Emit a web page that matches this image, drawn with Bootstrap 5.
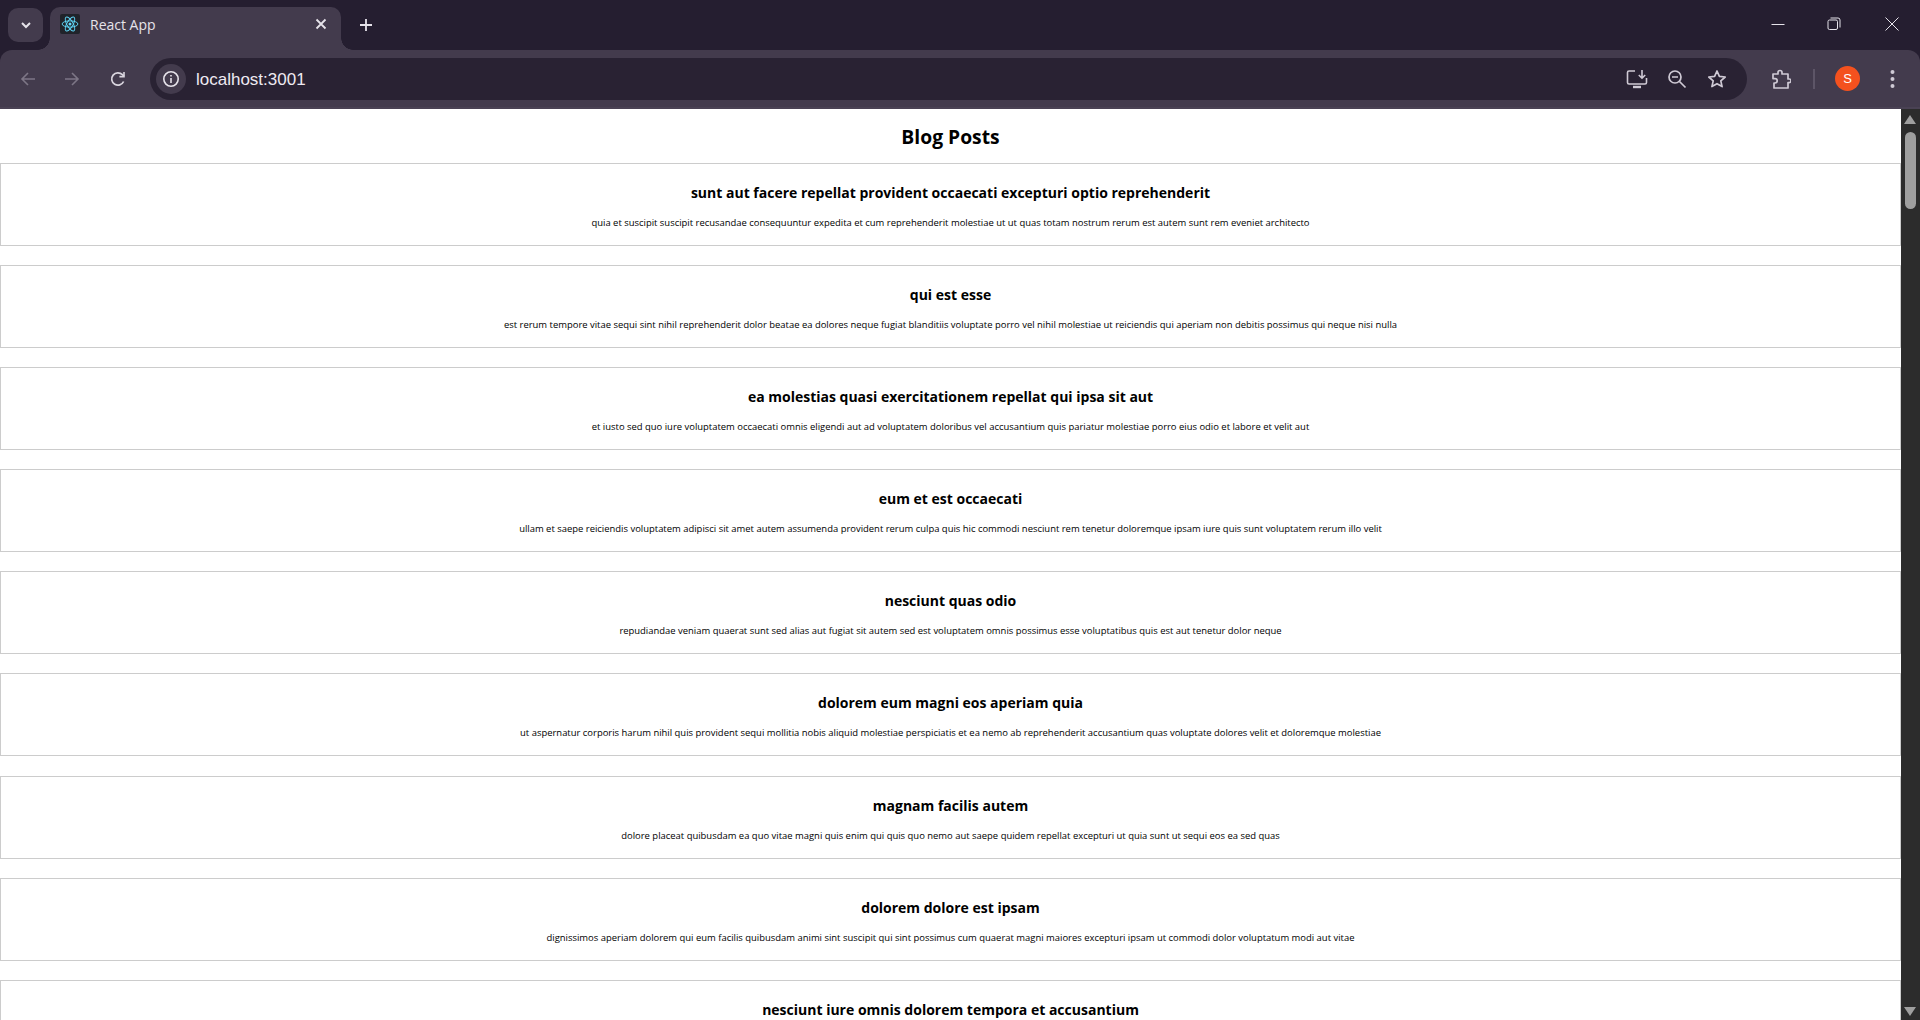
<!DOCTYPE html>
<html lang="en">
<head>
  <meta charset="UTF-8" />
  <title>React App</title>
  <link href="https://cdn.jsdelivr.net/npm/bootstrap@5.3.0/dist/css/bootstrap.min.css" rel="stylesheet" />
  <style>
    html, body { height: 100%; overflow: hidden; }
    body { font-family: "Open Sans", "Noto Sans", sans-serif; color: #000; }
    .shell { height: 1020px; background: #251e30; }
    .tabstrip { height: 50px; color: #e6e3ea; }
    .tab-toggle { width: 35px; height: 34px; margin: 8px 0 0 8px; background: #433b4d; border-radius: 10px; }
    .tab-live { width: 291px; height: 43px; margin: 7px 0 0 7px; padding: 0 14px 9px 10px; background: #433b4d; border-radius: 10px 10px 0 0; position: relative; font-size: 14px; color: #e6e3ea; }
    .tab-live::before, .tab-live::after { content: ""; position: absolute; bottom: 0; width: 12px; height: 12px; }
    .tab-live::before { left: -12px; background: radial-gradient(circle at 0 0, transparent 11.5px, #433b4d 12px); }
    .tab-live::after { right: -12px; background: radial-gradient(circle at 100% 0, transparent 11.5px, #433b4d 12px); }
    .favicon { width: 20px; height: 20px; background: #20232a; border-radius: 2px; }
    .tab-name { margin-left: 10px; }
    .tab-add { margin: 8px 0 0 8px; width: 34px; height: 34px; }
    .win-btn { width: 57px; height: 48px; }
    .win-restore { padding-right: 2px; }
    .toolbar { height: 59px; background: #433b4d; border-bottom: 2px solid #4a4254; border-radius: 12px 12px 0 0; padding: 0 11px 0 6px; }
    .nav-ico { width: 44px; height: 42px; }
    .reload-slot { margin-left: 2px; }
    .omnibox { height: 42px; width: 1597px; margin-left: 10px; background: #292233; border-radius: 21px; padding: 0 10px 0 6px; color: #eeeaf2; font-family: "Liberation Sans", sans-serif; font-size: 17px; }
    .info-ico { width: 30px; height: 30px; background: #433b4d; border-radius: 50%; margin-right: 10px; }
    .url-text { padding-top: 2px; }
    .omni-ico { width: 40px; }
    .puzzle-slot { margin-left: 14px; }
    .avatar { width: 25px; height: 25px; margin-left: 20px; border-radius: 50%; background: #f4511e; color: #fff; font-size: 13px; line-height: 25px; text-align: center; font-family: "Liberation Sans", sans-serif; }
    .divider { width: 2px; height: 20px; margin-left: 12px; background: #5d5567; }
    .more-dots { margin-right: 14px; }
    .viewport { height: 911px; }
    .page { overflow: hidden; }
    .page-title { font-size: 19.3px; line-height: 27px; font-weight: 700; margin: 14px 0 13px; }
    .post { height: 83px; margin-bottom: 19.1px; border: 1px solid #ccc; padding-top: 19px; }
    .post-title { font-size: 14px; line-height: 20px; font-weight: 700; margin: 0 0 13px; }
    .post-body { font-size: 9.45px; line-height: 13px; margin: 0; }
    .track { width: 19px; background: #2c2c2c; position: relative; }
    .thumb { position: absolute; left: 4px; top: 23px; width: 11px; height: 77px; border-radius: 6px; background: #9f9f9f; }
    .arrow-up, .arrow-down { position: absolute; left: 3px; width: 0; height: 0; border-left: 6.5px solid transparent; border-right: 6.5px solid transparent; }
    .arrow-up { top: 6px; border-bottom: 9px solid #9f9f9f; }
    .arrow-down { bottom: 4px; border-top: 9px solid #9f9f9f; }
  </style>
</head>
<body>
  <div class="shell d-flex flex-column">
    <div class="tabstrip d-flex">
      <div class="tab-toggle d-flex align-items-center justify-content-center">
        <svg width="12" height="12" viewBox="0 0 12 12" fill="none" stroke="#e6e3ea" stroke-width="2"><path d="M2 4l4 4 4-4"/></svg>
      </div>
      <div class="tab-live d-flex align-items-center">
        <div class="favicon d-flex align-items-center justify-content-center flex-shrink-0">
          <svg width="18" height="18" viewBox="-12 -12 24 24" fill="none" stroke="#61dafb" stroke-width="1.2"><circle r="2" fill="#61dafb" stroke="none"/><ellipse rx="10.5" ry="4.2"/><ellipse rx="10.5" ry="4.2" transform="rotate(60)"/><ellipse rx="10.5" ry="4.2" transform="rotate(120)"/></svg>
        </div>
        <span class="tab-name flex-grow-1">React App</span>
        <svg width="12" height="12" viewBox="0 0 12 12" stroke="#e6e3ea" stroke-width="1.8"><path d="M1.5 1.5l9 9M10.5 1.5l-9 9"/></svg>
      </div>
      <div class="tab-add d-flex align-items-center justify-content-center">
        <svg width="14" height="14" viewBox="0 0 14 14" stroke="#e6e3ea" stroke-width="1.8"><path d="M7 1v12M1 7h12"/></svg>
      </div>
      <div class="ms-auto d-flex">
        <div class="win-btn d-flex align-items-center justify-content-center">
          <svg width="14" height="14" viewBox="0 0 14 14" stroke="#e6e3ea" stroke-width="1"><path d="M0.5 7.5h13"/></svg>
        </div>
        <div class="win-btn win-restore d-flex align-items-center justify-content-center">
          <svg width="14" height="14" viewBox="0 0 14 14" fill="none" stroke="#e6e3ea" stroke-width="1"><rect x="1" y="3" width="9.5" height="9.5" rx="1.5"/><path d="M3.5 1h7.5a2 2 0 0 1 2 2v7.5"/></svg>
        </div>
        <div class="win-btn d-flex align-items-center justify-content-center">
          <svg width="14" height="14" viewBox="0 0 14 14" stroke="#e6e3ea" stroke-width="1"><path d="M0.5 0.5l13 13M13.5 0.5l-13 13"/></svg>
        </div>
      </div>
    </div>
    <div class="toolbar d-flex align-items-center">
      <div class="nav-ico d-flex align-items-center justify-content-center">
        <svg width="16" height="16" viewBox="0 0 16 16" fill="none" stroke="#7d7686" stroke-width="1.6"><path d="M15 8H2M8 2L2 8l6 6"/></svg>
      </div>
      <div class="nav-ico d-flex align-items-center justify-content-center">
        <svg width="16" height="16" viewBox="0 0 16 16" fill="none" stroke="#7d7686" stroke-width="1.6"><path d="M1 8h13M8 2l6 6-6 6"/></svg>
      </div>
      <div class="nav-ico reload-slot d-flex align-items-center justify-content-center">
        <svg width="18" height="18" viewBox="0 0 18 18" fill="none" stroke="#d9d5de" stroke-width="1.7"><path d="M14.6 11.5A6.2 6.2 0 1 1 13.4 4.7L15 6.3"/><path d="M15 2v4.6h-4.6" stroke-width="1.6"/></svg>
      </div>
      <div class="omnibox d-flex align-items-center">
        <div class="info-ico d-flex align-items-center justify-content-center flex-shrink-0">
          <svg width="18" height="18" viewBox="0 0 18 18" fill="none" stroke="#e6e3ea" stroke-width="1.6"><circle cx="9" cy="9" r="7.2"/><path d="M9 8v5M9 5v1.6"/></svg>
        </div>
        <span class="url-text flex-grow-1">localhost:3001</span>
        <div class="omni-ico d-flex justify-content-center">
          <svg width="22" height="20" viewBox="0 0 22 20" fill="none" stroke="#cfcad5" stroke-width="1.6"><path d="M9 2H3a1.5 1.5 0 0 0-1.5 1.5v10A1.5 1.5 0 0 0 3 15h16a1.5 1.5 0 0 0 1.5-1.5V9"/><path d="M16 1v8M12.8 6l3.2 3.2L19.2 6"/><path d="M7 18h8" stroke-width="2.4"/></svg>
        </div>
        <div class="omni-ico d-flex justify-content-center">
          <svg width="20" height="20" viewBox="0 0 20 20" fill="none" stroke="#cfcad5" stroke-width="1.7"><circle cx="8" cy="8" r="6"/><path d="M12.5 12.5l6 6M5 8h6"/></svg>
        </div>
        <div class="omni-ico d-flex justify-content-center">
          <svg width="20" height="20" viewBox="0 0 20 20" fill="none" stroke="#cfcad5" stroke-width="1.7" stroke-linejoin="round"><path d="M10 2l2.4 5.4 5.8.6-4.4 3.9 1.3 5.7L10 14.7l-5.1 2.9 1.3-5.7L1.8 8l5.8-.6z"/></svg>
        </div>
      </div>
      <div class="omni-ico puzzle-slot d-flex justify-content-center">
        <svg width="20" height="20" viewBox="0 0 20 20" fill="none" stroke="#cfcad5" stroke-width="1.7" stroke-linejoin="round"><path d="M2 5h5V3.5a2 2 0 0 1 4 0V5h6v5h1.2a1.8 1.8 0 0 1 0 3.6H17V19H3v-5h1a2.2 2.2 0 0 0 0-4.4H2z"/></svg>
      </div>
      <div class="divider"></div>
      <div class="avatar">S</div>
      <div class="more-dots ms-auto d-flex">
        <svg width="5" height="20" viewBox="0 0 5 20" fill="#cfcad5"><circle cx="2.5" cy="3" r="2"/><circle cx="2.5" cy="10" r="2"/><circle cx="2.5" cy="17" r="2"/></svg>
      </div>
    </div>
    <div class="viewport d-flex">
      <div class="page flex-grow-1 text-center bg-white">
        <h1 class="page-title">Blog Posts</h1>
        <div class="post">
          <h2 class="post-title">sunt aut facere repellat provident occaecati excepturi optio reprehenderit</h2>
          <p class="post-body">quia et suscipit suscipit recusandae consequuntur expedita et cum reprehenderit molestiae ut ut quas totam nostrum rerum est autem sunt rem eveniet architecto</p>
        </div>
        <div class="post">
          <h2 class="post-title">qui est esse</h2>
          <p class="post-body">est rerum tempore vitae sequi sint nihil reprehenderit dolor beatae ea dolores neque fugiat blanditiis voluptate porro vel nihil molestiae ut reiciendis qui aperiam non debitis possimus qui neque nisi nulla</p>
        </div>
        <div class="post">
          <h2 class="post-title">ea molestias quasi exercitationem repellat qui ipsa sit aut</h2>
          <p class="post-body">et iusto sed quo iure voluptatem occaecati omnis eligendi aut ad voluptatem doloribus vel accusantium quis pariatur molestiae porro eius odio et labore et velit aut</p>
        </div>
        <div class="post">
          <h2 class="post-title">eum et est occaecati</h2>
          <p class="post-body">ullam et saepe reiciendis voluptatem adipisci sit amet autem assumenda provident rerum culpa quis hic commodi nesciunt rem tenetur doloremque ipsam iure quis sunt voluptatem rerum illo velit</p>
        </div>
        <div class="post">
          <h2 class="post-title">nesciunt quas odio</h2>
          <p class="post-body">repudiandae veniam quaerat sunt sed alias aut fugiat sit autem sed est voluptatem omnis possimus esse voluptatibus quis est aut tenetur dolor neque</p>
        </div>
        <div class="post">
          <h2 class="post-title">dolorem eum magni eos aperiam quia</h2>
          <p class="post-body">ut aspernatur corporis harum nihil quis provident sequi mollitia nobis aliquid molestiae perspiciatis et ea nemo ab reprehenderit accusantium quas voluptate dolores velit et doloremque molestiae</p>
        </div>
        <div class="post">
          <h2 class="post-title">magnam facilis autem</h2>
          <p class="post-body">dolore placeat quibusdam ea quo vitae magni quis enim qui quis quo nemo aut saepe quidem repellat excepturi ut quia sunt ut sequi eos ea sed quas</p>
        </div>
        <div class="post">
          <h2 class="post-title">dolorem dolore est ipsam</h2>
          <p class="post-body">dignissimos aperiam dolorem qui eum facilis quibusdam animi sint suscipit qui sint possimus cum quaerat magni maiores excepturi ipsam ut commodi dolor voluptatum modi aut vitae</p>
        </div>
        <div class="post">
          <h2 class="post-title">nesciunt iure omnis dolorem tempora et accusantium</h2>
        </div>
      </div>
      <div class="track">
        <div class="arrow-up"></div>
        <div class="thumb"></div>
        <div class="arrow-down"></div>
      </div>
    </div>
  </div>
</body>
</html>
